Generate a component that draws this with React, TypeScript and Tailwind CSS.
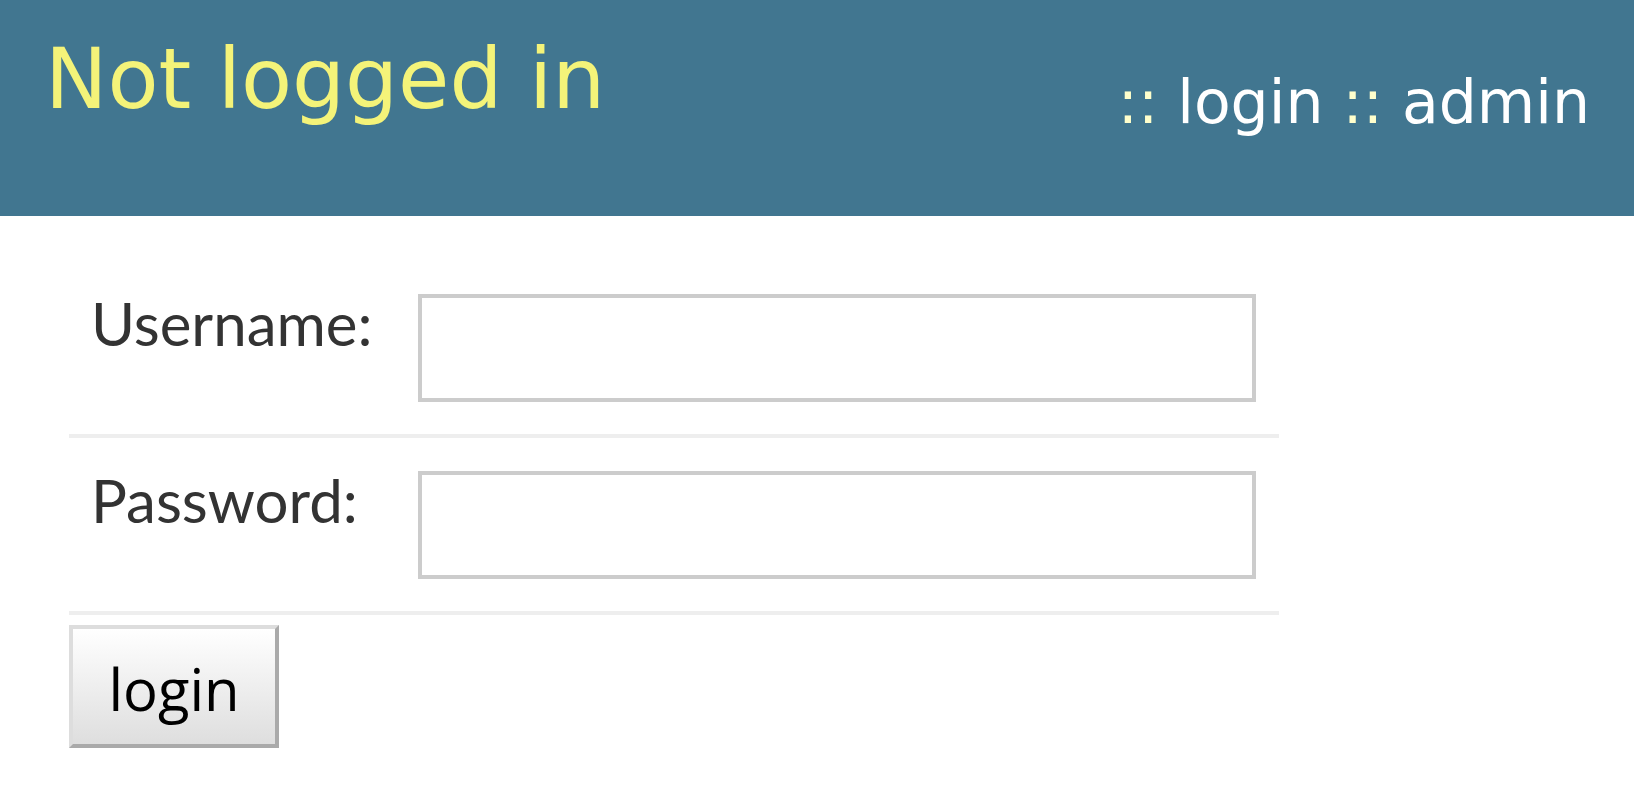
import React from "react";

export default function App() {
  return (
    <div className="min-h-screen w-full bg-white">
      <header className="flex h-[216px] items-start justify-between bg-[#417690] pl-[45px] pr-[44px]">
        <h1
          className="pt-[37px] text-[83.5px] leading-[84px] font-normal text-[#f4f379]"
          style={{ fontFamily: '"DejaVu Sans", sans-serif' }}
        >
          Not logged in
        </h1>
        <div
          className="pt-[72px] text-[60px] leading-[60px] text-white"
          style={{ fontFamily: '"DejaVu Sans", sans-serif' }}
        >
          <span className="text-[#ffffcc]">::</span> login{" "}
          <span className="text-[#ffffcc]">::</span> admin
        </div>
      </header>

      <form className="ml-[69px] mt-[45px] w-[1210px]">
        {[
          { label: "Username:", type: "text" },
          { label: "Password:", type: "password" },
        ].map((f) => (
          <div
            key={f.label}
            className="flex items-start border-b-4 border-[#eeeeee] pt-[33px] pb-[32px]"
          >
            <label
              className="w-[349px] shrink-0 pl-[22px] text-[60px] leading-[58px] text-[#333333]"
              style={{ fontFamily: 'Lato, sans-serif' }}
            >
              {f.label}
            </label>
            <input
              type={f.type}
              className="h-[108px] w-[838px] border-4 border-[#cccccc] bg-white outline-none"
            />
          </div>
        ))}
        <button
          type="button"
          className="mt-[10px] flex h-[123px] w-[210px] items-center justify-center border-4 border-t-[#dddddd] border-l-[#dddddd] border-r-[#aaaaaa] border-b-[#aaaaaa] bg-gradient-to-b from-white to-[#dedede] pt-[4px] text-[58px] leading-[58px] text-black"
          style={{ fontFamily: '"Open Sans", sans-serif' }}
        >
          login
        </button>
      </form>
    </div>
  );
}
